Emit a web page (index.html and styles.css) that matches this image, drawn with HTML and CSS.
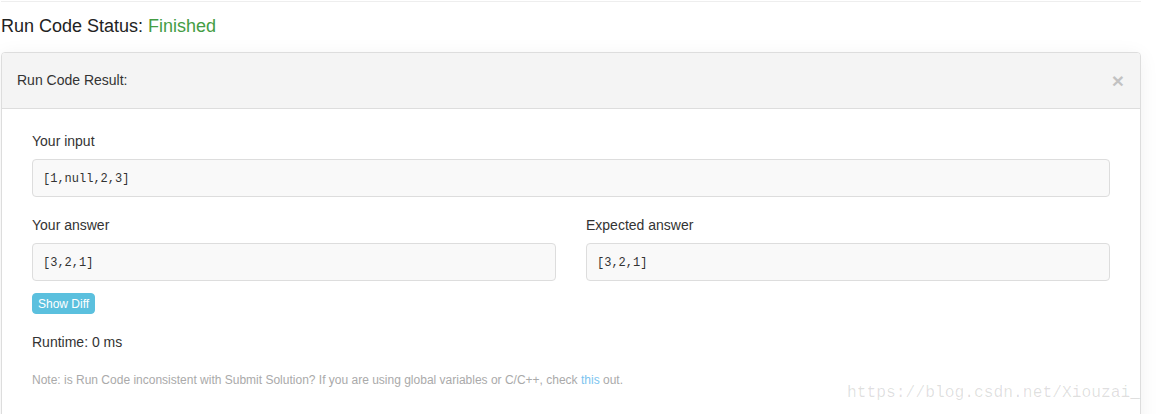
FILE: index.html
```html
<!doctype html>
<html lang="en">
<head>
    <meta charset="UTF-8">
    <title>Run Code Result</title>
    <link rel="stylesheet" href="styles.css">
</head>
<body>
    <div class="page">
        <h4 class="status">Run Code Status: <span class="finished">Finished</span></h4>
        <div class="panel">
            <div class="panel_head">
                Run Code Result:
                <span class="close">&times;</span>
            </div>
            <div class="panel_body">
                <label>Your input</label>
                <pre class="code">[1,null,2,3]</pre>
                <div class="row">
                    <div class="col">
                        <label>Your answer</label>
                        <pre class="code">[3,2,1]</pre>
                    </div>
                    <div class="col">
                        <label>Expected answer</label>
                        <pre class="code">[3,2,1]</pre>
                    </div>
                </div>
                <button class="btn_diff">Show Diff</button>
                <p class="runtime">Runtime: 0 ms</p>
                <p class="note">Note: is Run Code inconsistent with Submit Solution? If you are using global variables or C/C++, check <a href="#">this</a> out.</p>
            </div>
        </div>
    </div>
    <div class="mark">https://blog.csdn.net/Xiouzai_</div>
</body>
</html>
```

FILE: styles.css
```css
*{
    padding:0;
    margin:0;
    box-sizing: border-box;
}
html,body{
    height: 100%;
    overflow: hidden;
}
body{
    font-family: "Liberation Sans", Arial, sans-serif;
    font-size: 14px;
    color: #333;
    background: #fff;
}
.page{
    width: 1141px;
    height: 100%;
    padding-left: 1px;
    border-top: 1px solid #fff;
}
.status{
    border-top: 1px solid #eee;
    font-size: 18px;
    font-weight: normal;
    line-height: 20px;
    padding: 14px 0 0 0;
    height: 51px;
    color: #222;
}
.finished{
    color: #449d44;
}
.panel{
    border: 1px solid #ddd;
    border-radius: 4px;
    background: #fff;
    height: 400px;
    box-shadow: 0 3px 20px rgba(0,0,0,.06);
}
.panel_head{
    height: 56px;
    padding: 0 15px;
    line-height: 55px;
    background: #f4f4f4;
    border-bottom: 1px solid #ddd;
    border-radius: 3px 3px 0 0;
    display: flex;
    justify-content: space-between;
    color: #333;
}
.close{
    font-size: 21px;
    font-weight: bold;
    color: #000;
    opacity: .2;
    margin-right: 1px;
}
.panel_body{
    padding: 22px 30px 0 30px;
}
label{
    display: block;
    line-height: 20px;
    margin-bottom: 8px;
}
.code{
    font-family: "Liberation Mono", "DejaVu Sans Mono", monospace;
    font-size: 12px;
    line-height: 18px;
    padding: 10px 10px 8px;
    height: 38px;
    background: #f9f9f9;
    border: 1px solid #ddd;
    border-radius: 4px;
    color: #333;
    margin-bottom: 18px;
}
.row{
    display: flex;
    gap: 30px;
}
.col{
    flex: 1;
}
.row .code{
    margin-bottom: 12px;
}
.btn_diff{
    display: block;
    height: 21px;
    padding: 0 5px;
    font-family: "Liberation Sans", Arial, sans-serif;
    font-size: 12px;
    color: #fff;
    background: #5bc0de;
    border: 1px solid #5bc0de;
    border-radius: 4px;
    cursor: pointer;
}
.runtime{
    line-height: 20px;
    margin-top: 18px;
}
.note{
    font-size: 12px;
    line-height: 17px;
    margin-top: 20px;
    color: #aaa;
}
.note a{
    color: #7cc4f0;
    text-decoration: none;
}
.mark{
    position: absolute;
    left: 847px;
    top: 383px;
    font-family: "Liberation Mono", monospace;
    font-size: 16.3px;
    line-height: 20px;
    color: rgba(0,0,0,.13);
}
```
